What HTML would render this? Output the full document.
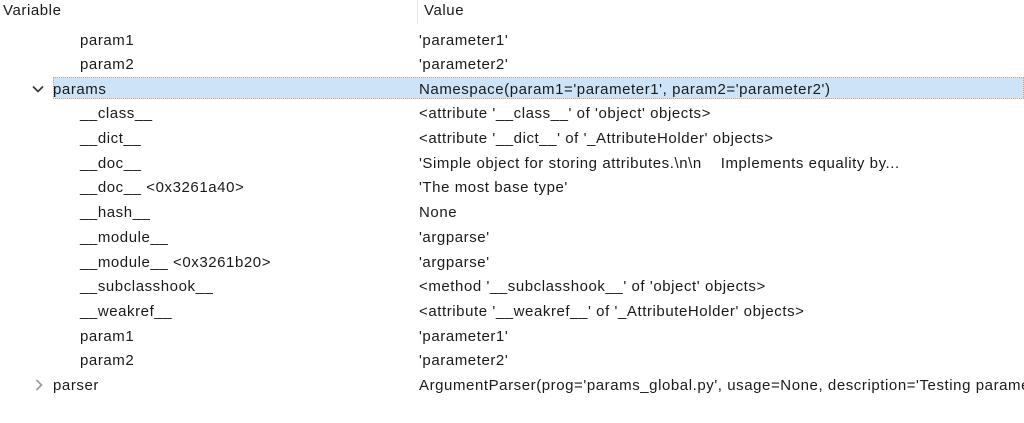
<!DOCTYPE html>
<html><head><style>
body{margin:0;width:1024px;height:423px;background:#fff;font-family:"Liberation Sans",sans-serif;font-size:15px;letter-spacing:0.57px;color:#1a1a1a;position:relative;overflow:hidden}
.h{position:absolute;top:1px;height:22px;line-height:20px}
.r{position:absolute;left:0;width:1024px;height:24px;line-height:26px;white-space:nowrap}
.n{position:absolute}
.v{position:absolute;left:419px}
.sel{position:absolute;left:53px;top:77px;width:971px;height:22px;background:#cce4f7;border:1px dotted #e0a070;box-sizing:border-box}
</style></head><body>
<div class="h" style="left:3px">Variable</div>
<div style="position:absolute;left:417px;top:0;width:1px;height:24px;background:#e5e5e5"></div>
<div class="h" style="left:424px">Value</div>
<div class="sel"></div>
<div class="r" style="top:28px"><span class="n" style="left:80px">param1</span><span class="v">'parameter1'</span></div>
<div class="r" style="top:52px"><span class="n" style="left:80px">param2</span><span class="v">'parameter2'</span></div>
<div class="r" style="top:77px"><svg style="position:absolute;left:32px;top:8px" width="12" height="8"><path d="M1 1.5L6 6.5L11 1.5" stroke="#333" stroke-width="1.6" fill="none"/></svg><span class="n" style="left:53px">params</span><span class="v">Namespace(param1='parameter1', param2='parameter2')</span></div>
<div class="r" style="top:101px"><span class="n" style="left:80px">__class__</span><span class="v">&lt;attribute '__class__' of 'object' objects&gt;</span></div>
<div class="r" style="top:126px"><span class="n" style="left:80px">__dict__</span><span class="v">&lt;attribute '__dict__' of '_AttributeHolder' objects&gt;</span></div>
<div class="r" style="top:151px"><span class="n" style="left:80px">__doc__</span><span class="v">'Simple object for storing attributes.\n\n&nbsp;&nbsp;&nbsp;&nbsp;Implements equality by...</span></div>
<div class="r" style="top:175px"><span class="n" style="left:80px">__doc__ &lt;0x3261a40&gt;</span><span class="v">'The most base type'</span></div>
<div class="r" style="top:200px"><span class="n" style="left:80px">__hash__</span><span class="v">None</span></div>
<div class="r" style="top:225px"><span class="n" style="left:80px">__module__</span><span class="v">'argparse'</span></div>
<div class="r" style="top:250px"><span class="n" style="left:80px">__module__ &lt;0x3261b20&gt;</span><span class="v">'argparse'</span></div>
<div class="r" style="top:274px"><span class="n" style="left:80px">__subclasshook__</span><span class="v">&lt;method '__subclasshook__' of 'object' objects&gt;</span></div>
<div class="r" style="top:299px"><span class="n" style="left:80px">__weakref__</span><span class="v">&lt;attribute '__weakref__' of '_AttributeHolder' objects&gt;</span></div>
<div class="r" style="top:324px"><span class="n" style="left:80px">param1</span><span class="v">'parameter1'</span></div>
<div class="r" style="top:348px"><span class="n" style="left:80px">param2</span><span class="v">'parameter2'</span></div>
<div class="r" style="top:373px"><svg style="position:absolute;left:35px;top:6px" width="8" height="12"><path d="M1.5 1L6.5 6L1.5 11" stroke="#999" stroke-width="1.6" fill="none"/></svg><span class="n" style="left:53px">parser</span><span class="v">ArgumentParser(prog='params_global.py', usage=None, description='Testing parameters'</span></div>
</body></html>
